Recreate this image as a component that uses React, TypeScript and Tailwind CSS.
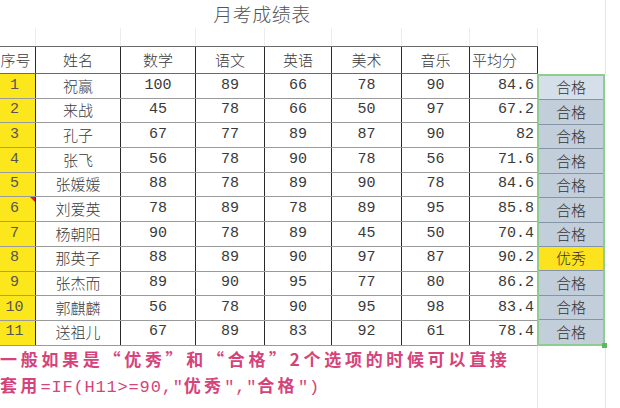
import React from "react";

const CJK = { fontFamily: '"Noto Sans CJK SC", "Noto Sans", sans-serif' };

type Row = [number, string, number, number, number, number, number, string, string];

const rows: Row[] = [
  [1, "祝赢", 100, 89, 66, 78, 90, "84.6", "合格"],
  [2, "来战", 45, 78, 66, 50, 97, "67.2", "合格"],
  [3, "孔子", 67, 77, 89, 87, 90, "82", "合格"],
  [4, "张飞", 56, 78, 90, 78, 56, "71.6", "合格"],
  [5, "张媛媛", 88, 78, 89, 90, 78, "84.6", "合格"],
  [6, "刘爱英", 78, 89, 78, 89, 95, "85.8", "合格"],
  [7, "杨朝阳", 90, 78, 89, 45, 50, "70.4", "合格"],
  [8, "那英子", 88, 89, 90, 97, 87, "90.2", "优秀"],
  [9, "张杰而", 89, 90, 95, 77, 80, "86.2", "合格"],
  [10, "郭麒麟", 56, 78, 90, 95, 98, "83.4", "合格"],
  [11, "送祖儿", 67, 89, 83, 92, 61, "78.4", "合格"],
];

const gridCols = "grid grid-cols-[36px_85px_75px_69px_67px_70px_68px_68px]";

function NumCell({ v }: { v: number }) {
  return (
    <div className="flex items-center justify-center border-r border-[#2a2a2a] font-['Liberation_Mono',monospace] text-[15px] text-[#3a3a3a]">
      {v}
    </div>
  );
}

export default function App() {
  return (
    <div className="w-[620px] h-[408px] bg-white overflow-hidden text-[#3a3a3a]" style={CJK}>
      {/* title area */}
      <div className="flex h-[46px]">
        <div className="w-[538px] flex flex-col">
          <div className="h-[28px] flex items-center justify-center">
            <span className="text-[19px] font-light text-[#555] tracking-[0.5px] ml-[-14px]">月考成绩表</span>
          </div>
          <div className={`${gridCols} flex-1`}>
            {Array.from({ length: 8 }).map((_, i) => (
              <div key={i} className="border-r border-[#ececec]" />
            ))}
          </div>
        </div>
        <div className="w-[68px] border-r border-[#e6e6e6]" />
      </div>

      {/* header row */}
      <div className="flex h-[28px]">
        <div className={`${gridCols} h-[28px] w-[538px] border-t border-b border-[#6a6a6a] whitespace-nowrap font-light text-[15px]`}>
          <div className="flex items-center justify-center pr-[4px] border-r border-[#2a2a2a] overflow-visible">序号</div>
          {["姓名", "数学", "语文", "英语", "美术", "音乐"].map((h) => (
            <div key={h} className="flex items-center justify-center border-r border-[#2a2a2a]">
              {h}
            </div>
          ))}
          <div className="flex items-center justify-start pl-[2px] border-r border-[#2a2a2a]">平均分</div>
        </div>
        <div className="w-[68px] border-r border-[#e6e6e6]" />
      </div>

      {/* body */}
      <div className="flex">
        <div className="w-[538px] flex flex-col">
          {rows.map((r, idx) => (
            <div key={r[0]} className={`${gridCols} h-[24.7px] border-b border-[#9a9a9a] whitespace-nowrap`}>
              <div className="relative flex items-center justify-center pr-[6px] bg-[#fce61c] border-r border-[#2a2a2a] font-['Liberation_Mono',monospace] text-[15px] text-[#555]">
                {r[0]}
                {idx === 5 && (
                  <span className="absolute right-0 top-0 w-0 h-0 border-l-[5px] border-l-transparent border-t-[5px] border-t-[#d22]" />
                )}
              </div>
              <div className="flex items-center justify-center border-r border-[#2a2a2a] text-[15px] font-light">{r[1]}</div>
              <NumCell v={r[2]} />
              <NumCell v={r[3]} />
              <NumCell v={r[4]} />
              <NumCell v={r[5]} />
              <NumCell v={r[6]} />
              <div className="flex items-center justify-end pr-[3px] border-r border-[#2a2a2a] font-['Liberation_Mono',monospace] text-[15px] text-[#3a3a3a]">
                {r[7]}
              </div>
            </div>
          ))}
        </div>
        <div className="relative w-[68px] ml-[-1px] border-2 border-[#8fcc8f] flex flex-col">
          {rows.map((r, idx) => (
            <div
              key={r[0]}
              className={`flex-1 flex items-center justify-center text-[15px] font-light text-[#333] ${
                idx < rows.length - 1 ? "border-b border-[#8695a6]" : ""
              } ${r[8] === "优秀" ? "bg-[#fde21e]" : idx === 0 ? "bg-[#d5dfea]" : "bg-[#c3cedb]"}`}
            >
              {r[8]}
            </div>
          ))}
          <span className="absolute right-[-4px] bottom-[-4px] w-[5px] h-[5px] bg-[#5cb85c]" />
        </div>
        <div className="flex-1" />
      </div>

      {/* note */}
      <div className="flex">
        <div className="w-[537px] text-[17px] font-bold text-[#d6437a] leading-[26px]">
          <div className="tracking-[3.7px] whitespace-nowrap">一般如果是“优秀”和“合格”2个选项的时候可以直接</div>
          <div className="whitespace-nowrap">
            <span className="tracking-[3.3px]">套用</span>
            <span className="font-['Liberation_Mono',monospace] font-normal tracking-[0.8px]">=IF(H11&gt;=90,"</span>
            <span className="tracking-[3.3px]">优秀</span>
            <span className="font-['Liberation_Mono',monospace] font-normal tracking-[0.8px]">","</span>
            <span className="tracking-[3.3px]">合格</span>
            <span className="font-['Liberation_Mono',monospace] font-normal tracking-[0.8px]">")</span>
          </div>
        </div>
        <div className="w-[69px] h-[62px] border-l border-r border-[#e6e6e6]" />
      </div>
    </div>
  );
}
